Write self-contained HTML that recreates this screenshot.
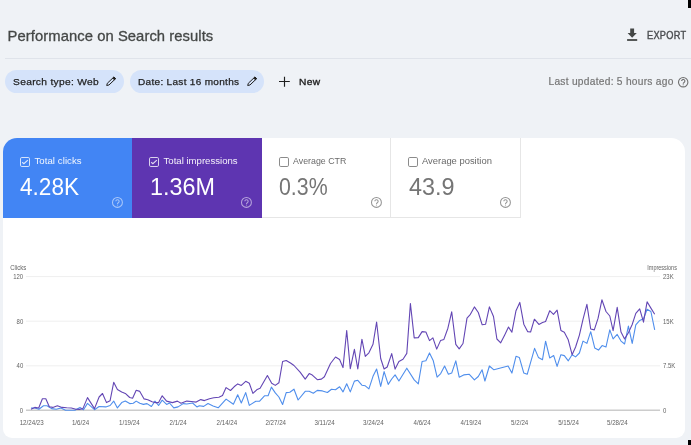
<!DOCTYPE html>
<html><head><meta charset="utf-8"><style>
html,body{margin:0;padding:0;}
body{width:691px;height:445px;overflow:hidden;position:relative;background:#eff2f6;font-family:"Liberation Sans", sans-serif;}
</style></head><body><div style="position:absolute;left:0;top:0;width:691px;height:445px;will-change:transform">
<div style="position:absolute;left:688px;top:0;width:3px;height:8px;background:#000"></div>
<div style="position:absolute;left:688px;top:440px;width:3px;height:5px;background:#000"></div>
<div style="position:absolute;left:7.6px;top:28.01px;font-size:14.8px;line-height:16.53px;color:#444746;font-weight:400;letter-spacing:0.06px;white-space:nowrap;-webkit-text-stroke:0.3px #444746;">Performance on Search results</div>
<div style="position:absolute;left:5px;top:58px;width:686px;height:1px;background:#dfe3ea"></div>
<svg style="position:absolute;left:625px;top:26px" width="14" height="16" viewBox="0 0 14 16"><path d="M5.2,2.5 H9.1 V6.9 H11.8 L7.15,11.7 L2.6,6.9 H5.2 Z" fill="#444746"/><rect x="2.1" y="13.1" width="10.1" height="1.8" fill="#444746"/></svg>
<div style="position:absolute;left:647px;top:30.08px;font-size:10.3px;line-height:11.51px;color:#4a4d50;font-weight:400;letter-spacing:0.3px;white-space:nowrap;transform:scaleX(0.895);transform-origin:0 0;-webkit-text-stroke:0.4px #4a4d50;">EXPORT</div>
<div style="position:absolute;left:5px;top:70px;width:119px;height:23px;border-radius:12px;background:#d5e3fa"></div>
<div style="position:absolute;left:12.9px;top:76.93px;font-size:9.8px;line-height:10.95px;color:#1f1f1f;font-weight:400;letter-spacing:0.3px;white-space:nowrap;transform:scaleX(1.044);transform-origin:0 0;-webkit-text-stroke:0.25px #1f1f1f;">Search type: Web</div>
<div style="position:absolute;left:130px;top:70px;width:134px;height:23px;border-radius:12px;background:#d5e3fa"></div>
<div style="position:absolute;left:138.2px;top:76.93px;font-size:9.8px;line-height:10.95px;color:#1f1f1f;font-weight:400;letter-spacing:0.3px;white-space:nowrap;transform:scaleX(1.023);transform-origin:0 0;-webkit-text-stroke:0.25px #1f1f1f;">Date: Last 16 months</div>
<svg style="position:absolute;left:105px;top:76px" width="12" height="11" viewBox="0 0 12 11"><path d="M1.7,9.5 L2.32,7.25 L8.97,0.93 L10.63,2.67 L3.98,8.99 Z" fill="none" stroke="#1f1f1f" stroke-width="1" stroke-linejoin="round"/><path d="M7.67,2.17 L8.97,0.93 L10.63,2.67 L9.33,3.91 Z" fill="#1f1f1f" stroke="#1f1f1f" stroke-width="0.6" stroke-linejoin="round"/></svg>
<svg style="position:absolute;left:246px;top:76px" width="12" height="11" viewBox="0 0 12 11"><path d="M1.7,9.5 L2.32,7.25 L8.97,0.93 L10.63,2.67 L3.98,8.99 Z" fill="none" stroke="#1f1f1f" stroke-width="1" stroke-linejoin="round"/><path d="M7.67,2.17 L8.97,0.93 L10.63,2.67 L9.33,3.91 Z" fill="#1f1f1f" stroke="#1f1f1f" stroke-width="0.6" stroke-linejoin="round"/></svg>
<svg style="position:absolute;left:278px;top:76px" width="13" height="12" viewBox="0 0 13 12"><path d="M6.5,0.7 V10.7 M1,5.5 H11.8" stroke="#1f1f1f" stroke-width="1.15"/></svg>
<div style="position:absolute;left:298.8px;top:76.93px;font-size:9.8px;line-height:10.95px;color:#1f1f1f;font-weight:400;letter-spacing:0.3px;white-space:nowrap;transform:scaleX(1.04);transform-origin:0 0;-webkit-text-stroke:0.35px #1f1f1f;">New</div>
<div style="position:absolute;left:548.5px;top:76.07px;font-size:10.2px;line-height:11.39px;color:#757575;font-weight:400;letter-spacing:0.27px;white-space:nowrap;-webkit-text-stroke:0.2px #757575;">Last updated: 5 hours ago</div>
<svg style="position:absolute;left:676.5999999999999px;top:75.5px" width="12.4" height="12.4" viewBox="0 0 12.4 12.4"><circle cx="6.2" cy="6.2" r="4.7" fill="none" stroke="#707070" stroke-width="1.1"/><path d="M4.6,5.1 a1.65,1.65 0 1 1 2.5,1.4 c-0.6,0.35 -0.85,0.6 -0.85,1.25" fill="none" stroke="#707070" stroke-width="1.1"/><circle cx="6.2" cy="8.75" r="0.6" fill="#707070"/></svg>
<div style="position:absolute;left:3px;top:138px;width:682px;height:300px;background:#fff;border-radius:14px 14px 9px 9px;overflow:hidden">
 <div style="position:absolute;left:0;top:0;width:129px;height:80px;background:#4285f4"></div>
 <div style="position:absolute;left:129px;top:0;width:130px;height:80px;background:#5e35b1"></div>
 <div style="position:absolute;left:259px;top:0;width:128px;height:79px;border-right:1px solid #e6e6e6;border-bottom:1px solid #e6e6e6"></div>
 <div style="position:absolute;left:388px;top:0;width:129px;height:79px;border-right:1px solid #e6e6e6;border-bottom:1px solid #e6e6e6"></div>
</div>
<svg style="position:absolute;left:20.1px;top:157.1px;opacity:0.82" width="10" height="10" viewBox="0 0 10 10"><rect x="0.5" y="0.5" width="9" height="9" rx="1.3" fill="none" stroke="#ffffff" stroke-width="0.95"/><path d="M2.2,5.3 L3.9,6.7 L7.8,3.1" fill="none" stroke="#ffffff" stroke-width="1.15"/></svg>
<div style="position:absolute;left:34.4px;top:155.91px;font-size:9.6px;line-height:10.72px;color:rgba(255,255,255,0.93);font-weight:400;letter-spacing:0.08px;white-space:nowrap;">Total clicks</div>
<div style="position:absolute;left:20.2px;top:174.04px;font-size:23.6px;line-height:26.36px;color:#ffffff;font-weight:400;letter-spacing:0px;white-space:nowrap;transform:scaleX(0.958);transform-origin:0 0;">4.28K</div>
<svg style="position:absolute;left:110.75px;top:196.35000000000002px" width="12.9" height="12.9" viewBox="0 0 12.9 12.9"><circle cx="6.45" cy="6.45" r="4.95" fill="none" stroke="rgba(255,255,255,0.55)" stroke-width="1.05"/><path d="M4.85,5.35 a1.65,1.65 0 1 1 2.5,1.4 c-0.6,0.35 -0.85,0.6 -0.85,1.25" fill="none" stroke="rgba(255,255,255,0.55)" stroke-width="1.05"/><circle cx="6.45" cy="9.0" r="0.6" fill="rgba(255,255,255,0.55)"/></svg>
<svg style="position:absolute;left:149.2px;top:157.1px;opacity:0.82" width="10" height="10" viewBox="0 0 10 10"><rect x="0.5" y="0.5" width="9" height="9" rx="1.3" fill="none" stroke="#ffffff" stroke-width="0.95"/><path d="M2.2,5.3 L3.9,6.7 L7.8,3.1" fill="none" stroke="#ffffff" stroke-width="1.15"/></svg>
<div style="position:absolute;left:163.5px;top:155.91px;font-size:9.6px;line-height:10.72px;color:rgba(255,255,255,0.93);font-weight:400;letter-spacing:0px;white-space:nowrap;">Total impressions</div>
<div style="position:absolute;left:149.8px;top:174.04px;font-size:23.6px;line-height:26.36px;color:#ffffff;font-weight:400;letter-spacing:0px;white-space:nowrap;transform:scaleX(0.99);transform-origin:0 0;">1.36M</div>
<svg style="position:absolute;left:240.35000000000002px;top:196.35000000000002px" width="12.9" height="12.9" viewBox="0 0 12.9 12.9"><circle cx="6.45" cy="6.45" r="4.95" fill="none" stroke="rgba(255,255,255,0.55)" stroke-width="1.05"/><path d="M4.85,5.35 a1.65,1.65 0 1 1 2.5,1.4 c-0.6,0.35 -0.85,0.6 -0.85,1.25" fill="none" stroke="rgba(255,255,255,0.55)" stroke-width="1.05"/><circle cx="6.45" cy="9.0" r="0.6" fill="rgba(255,255,255,0.55)"/></svg>
<svg style="position:absolute;left:278.9px;top:157.1px;opacity:1.0" width="10" height="10" viewBox="0 0 10 10"><rect x="0.5" y="0.5" width="9" height="9" rx="1.3" fill="none" stroke="#858585" stroke-width="0.95"/></svg>
<div style="position:absolute;left:292.7px;top:155.91px;font-size:9.6px;line-height:10.72px;color:#6a6a6a;font-weight:400;letter-spacing:0px;white-space:nowrap;transform:scaleX(0.92);transform-origin:0 0;">Average CTR</div>
<div style="position:absolute;left:279.2px;top:174.04px;font-size:23.6px;line-height:26.36px;color:#757575;font-weight:400;letter-spacing:0px;white-space:nowrap;transform:scaleX(0.904);transform-origin:0 0;">0.3%</div>
<svg style="position:absolute;left:369.75px;top:196.35000000000002px" width="12.9" height="12.9" viewBox="0 0 12.9 12.9"><circle cx="6.45" cy="6.45" r="4.95" fill="none" stroke="#959595" stroke-width="1.05"/><path d="M4.85,5.35 a1.65,1.65 0 1 1 2.5,1.4 c-0.6,0.35 -0.85,0.6 -0.85,1.25" fill="none" stroke="#959595" stroke-width="1.05"/><circle cx="6.45" cy="9.0" r="0.6" fill="#959595"/></svg>
<svg style="position:absolute;left:408.3px;top:157.1px;opacity:1.0" width="10" height="10" viewBox="0 0 10 10"><rect x="0.5" y="0.5" width="9" height="9" rx="1.3" fill="none" stroke="#858585" stroke-width="0.95"/></svg>
<div style="position:absolute;left:422.1px;top:155.91px;font-size:9.6px;line-height:10.72px;color:#6a6a6a;font-weight:400;letter-spacing:0px;white-space:nowrap;transform:scaleX(0.98);transform-origin:0 0;">Average position</div>
<div style="position:absolute;left:408.6px;top:174.04px;font-size:23.6px;line-height:26.36px;color:#757575;font-weight:400;letter-spacing:0px;white-space:nowrap;transform:scaleX(0.99);transform-origin:0 0;">43.9</div>
<svg style="position:absolute;left:499.25px;top:196.35000000000002px" width="12.9" height="12.9" viewBox="0 0 12.9 12.9"><circle cx="6.45" cy="6.45" r="4.95" fill="none" stroke="#959595" stroke-width="1.05"/><path d="M4.85,5.35 a1.65,1.65 0 1 1 2.5,1.4 c-0.6,0.35 -0.85,0.6 -0.85,1.25" fill="none" stroke="#959595" stroke-width="1.05"/><circle cx="6.45" cy="9.0" r="0.6" fill="#959595"/></svg>
<svg style="position:absolute;left:0;top:0" width="691" height="445" viewBox="0 0 691 445">
 <g stroke="#efefef" stroke-width="1">
  <line x1="26" y1="276.6" x2="660" y2="276.6"/>
  <line x1="26" y1="321.2" x2="660" y2="321.2"/>
  <line x1="26" y1="365.8" x2="660" y2="365.8"/>
 </g>
 <line x1="26" y1="410.2" x2="660" y2="410.2" stroke="#cccccc" stroke-width="1.6"/>
 <g font-family='"Liberation Sans", sans-serif' font-size="6.8" fill="#636363">
  <text transform="translate(10.3,270.0) scale(0.88,1)" text-anchor="start">Clicks</text>
  <text transform="translate(23.2,279.0) scale(0.88,1)" text-anchor="end">120</text>
  <text transform="translate(23.2,323.6) scale(0.88,1)" text-anchor="end">80</text>
  <text transform="translate(23.2,368.2) scale(0.88,1)" text-anchor="end">40</text>
  <text transform="translate(23.2,412.6) scale(0.88,1)" text-anchor="end">0</text>
  <text transform="translate(676.9,270.0) scale(0.81,1)" text-anchor="end">Impressions</text>
  <text transform="translate(663,279.0) scale(0.88,1)" text-anchor="start">23K</text>
  <text transform="translate(663,323.6) scale(0.88,1)" text-anchor="start">15K</text>
  <text transform="translate(663,368.2) scale(0.88,1)" text-anchor="start">7.5K</text>
  <text transform="translate(663,412.6) scale(0.88,1)" text-anchor="start">0</text>
 </g>
 <g font-family='"Liberation Sans", sans-serif' font-size="6.8" fill="#636363" text-anchor="middle">
  <text transform="translate(31.7,424.7) scale(0.91,1)">12/24/23</text>
  <text transform="translate(80.5,424.7) scale(0.91,1)">1/6/24</text>
  <text transform="translate(129.3,424.7) scale(0.91,1)">1/19/24</text>
  <text transform="translate(178.1,424.7) scale(0.91,1)">2/1/24</text>
  <text transform="translate(226.9,424.7) scale(0.91,1)">2/14/24</text>
  <text transform="translate(275.7,424.7) scale(0.91,1)">2/27/24</text>
  <text transform="translate(324.5,424.7) scale(0.91,1)">3/11/24</text>
  <text transform="translate(373.3,424.7) scale(0.91,1)">3/24/24</text>
  <text transform="translate(422.1,424.7) scale(0.91,1)">4/6/24</text>
  <text transform="translate(470.9,424.7) scale(0.91,1)">4/19/24</text>
  <text transform="translate(519.7,424.7) scale(0.91,1)">5/2/24</text>
  <text transform="translate(568.5,424.7) scale(0.91,1)">5/15/24</text>
  <text transform="translate(617.3,424.7) scale(0.91,1)">5/28/24</text>
 </g>
 <polyline points="31,408 34.8,408 38.9,409.2 43.5,405.7 47,405.7 51.6,408.6 56.3,409.2 60.9,408 65.5,410.3 74.8,410.3 80,407.4 83.5,409.7 87.5,403.4 94.5,409.7 99.1,406.5 105.8,406.9 110.1,405.5 113.7,401.1 117.4,407.9 121.7,402.6 125.3,401.1 129.7,403.6 133.3,403.3 136.2,401.1 139.8,403.3 143.4,404.4 147,403.6 151.4,406.5 155,401.1 158.6,405.5 162.2,400.1 166.6,404.4 169.5,403 173.8,407.9 178.1,406.9 183.2,403.6 186.8,404 192.6,403 196.9,406.9 199.3,405.7 203.7,406.4 208,403.5 213.1,405.9 218.2,407.8 226.1,399.1 233.4,404.2 237.7,394.8 241.3,403 245.7,392.6 249.3,405.4 255.8,401.3 259.4,401.3 264.5,395.8 268.1,395.8 271.4,387.1 275.3,392.9 278.9,397 282.6,404.5 286.2,392.6 289.8,392.3 294,389.2 298.1,400 305.2,391.3 309.2,391.3 313.3,393.3 317.3,390.4 322.4,390.9 327.4,392.5 331.5,389.2 335.5,389.8 339.6,386.8 343,391.9 346.7,383.8 350.3,391.9 354.4,381.1 357.8,380.3 361.9,385.2 365.3,385.8 368.9,388.8 373,376.3 376.6,369 380.7,386.4 384.1,371.6 388.2,384.4 391.7,379 395.1,374.9 398.9,381 406.8,368.2 414.2,379.9 418.3,383.9 422.1,361.5 425.9,360.8 429.5,352.9 433.3,360.8 437.1,377.2 440.7,373.6 444.6,366 448.4,374.3 451.7,373.1 455.8,360.8 459.2,377.2 463.7,374.9 469.3,374.3 474.4,379.9 478.3,376.5 482.1,369.8 484.9,381 489.4,366 493.9,369.8 508.1,366 511.9,373.1 516,356.3 519.3,357.4 523.8,373.1 527.2,374.3 534.6,348.4 538.4,357.4 542.5,359.7 545.6,341.2 549.7,357.9 553.7,355.6 557.1,366.4 560.9,354.7 564.3,355.6 568.3,360.8 572.1,354.7 575.6,356.9 579.4,353 583,341.1 586.9,343.4 590.7,331.7 594.7,347.9 598.5,350.1 602.1,345.6 606,347 609.8,329.9 613.1,338.9 617.2,334.4 621,341.1 624.6,344 628.4,326.1 632.2,343.4 635.8,324.9 639.7,320.4 643.5,318.7 647.1,309.2 650.9,311.5 654.7,329.9" fill="none" stroke="#4f8eec" stroke-width="1.1" stroke-linejoin="round"/>
 <polyline points="31,409.2 34.8,407.4 38.7,408 42.4,398.7 45.8,398.7 49.3,406.8 52.8,407.4 57.4,405.7 62,407.4 66.7,407.8 71.3,408 75.9,409.2 79.4,409.4 82.9,408.6 87.5,397.6 94.5,408.6 99.1,397 102.5,393.5 106.5,402.6 110.1,400.7 113.7,382.3 117.4,389.5 121.7,392 125.3,393.4 129.7,397.5 132.6,398.2 136.2,390.3 139.8,391.4 144.1,398.9 147.8,399.7 152.1,401.8 155.7,402.6 158.6,402.6 162.2,395.8 166.6,401.1 172.4,402.6 177.4,401.1 181,403.3 186.8,401.1 191.2,401.5 196.2,402.1 200.8,399.6 204.4,400.6 209.5,398.7 213.8,397.7 218.9,397.3 222.5,395.5 226.1,387.6 230.5,390.5 234.1,386.8 237.7,383.9 241.3,385.4 245.7,381.3 249.3,383.2 252.9,393.4 257.2,389.4 260.1,388.3 267.4,375.5 271.7,383.2 275.3,385.4 278.9,382.8 282.6,361.5 286.2,360.5 290.5,363 294,365.5 300.1,372.2 305.2,379.1 309.2,373.6 312.3,375.1 317.3,379.7 321.4,379.1 324.4,376.7 330.5,363.5 335.5,357 339.6,359.5 343,367.6 346.7,330.5 350.3,368.6 354.4,349.4 357.8,369 361.9,339.2 365.3,356.4 368.9,352.8 373,344.3 376.6,322 380.7,358.5 384.1,369 387.2,367 391.7,353.6 395.1,369.1 398.9,361.5 403,359.2 406.8,353.4 410.4,303.5 414.2,337.9 418.3,337.6 422.1,331.6 425.9,332 429.5,340.6 432.9,337.9 436.7,349.1 440.5,340.6 443.9,339.4 447.9,328.2 451.7,311.8 455.8,344.4 459.2,348.9 463,343.5 467,318.1 470.4,314.3 474.4,306.9 478.3,312.5 482.2,324.8 485.6,324.2 489.4,306.9 493.5,316.5 496.9,339 500.7,342.8 504.7,334.9 508.5,327.1 511.9,332.2 516,310.7 519.8,302.4 523.8,324.2 527.6,331.6 530.6,332 534.4,319.2 538.9,324.4 542.5,322.6 545.6,321.5 549.7,310.7 553.5,314.3 557.1,310.2 560.9,330.4 564.3,332.2 568.1,339.4 572.1,354.7 575.6,347 579.4,335.1 583,319.3 586.9,304.3 590.7,329 594.3,329.9 598.1,318.2 601.9,299.8 606,311.5 609.8,316 613.1,330.6 617.2,307.4 621,332.1 624.6,338.9 628.4,332.8 632.2,324.5 635.8,313.3 639.7,308.8 643.5,322.2 647.1,301.8 650.9,308.1 654.7,314.2" fill="none" stroke="#6346b4" stroke-width="1.1" stroke-linejoin="round"/>
</svg>
</div></body></html>
